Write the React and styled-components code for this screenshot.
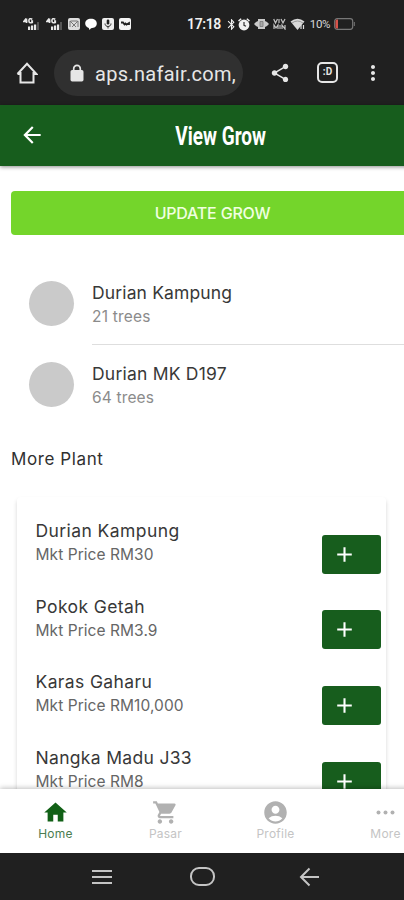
import React from "react";
import styled, { createGlobalStyle } from "styled-components";
import {
  MdHome,
  MdShoppingCart,
  MdAccountCircle,
  MdMoreVert,
  MdArrowBack,
  MdAdd,
  MdShare,
  MdBluetooth,
} from "react-icons/md";

const GlobalStyle = createGlobalStyle`
  * { box-sizing: border-box; }
  body { margin: 0; background: #fff; overflow: hidden; }
`;

const Screen = styled.div`
  width: 404px;
  height: 900px;
  display: flex;
  flex-direction: column;
  overflow: hidden;
  background: #fff;
  font-family: Inter, "Liberation Sans", sans-serif;
  svg { display: block; flex: none; }
`;

const StatusBar = styled.div`
  height: 48px;
  flex: none;
  display: flex;
  justify-content: space-between;
  padding: 0 49px 0 23px;
  align-items: center;
  background: #202020;
  color: #f0f0f0;
  font-family: Roboto, sans-serif;
`;

const StatusGroup = styled.div`
  display: flex;
  align-items: center;
  gap: ${(p) => p.$gap}px;
`;

const Clock = styled.span`
  font-size: 14px;
  font-weight: 600;
  letter-spacing: -0.4px;
  margin-right: 4px;
`;

const Percent = styled.span`
  font-size: 11.5px;
  margin: 0 4px 0 5px;
  letter-spacing: -0.4px;
  color: #d8d8d8;
`;

const AddressBar = styled.div`
  height: 57px;
  flex: none;
  display: flex;
  align-items: center;
  padding: 0 19px 8px 16px;
  background: #202020;
  color: #e6e6e6;
`;

const UrlPill = styled.div`
  width: 189px;
  height: 46px;
  margin-left: 16px;
  padding-left: 16px;
  display: flex;
  align-items: center;
  gap: 11px;
  border-radius: 23px;
  background: #303030;
`;

const Url = styled.span`
  white-space: nowrap;
  font: 400 20px/28px Roboto, sans-serif;
  letter-spacing: 0.3px;
  padding-top: 2px;
`;

const BrowserActions = styled.div`
  flex: 1;
  display: flex;
  align-items: center;
  justify-content: space-between;
  margin-left: 26px;
`;

const Header = styled.header`
  position: relative;
  z-index: 1;
  flex: none;
  width: 440px;
  height: 61px;
  display: grid;
  grid-template-columns: 64px 1fr 63px;
  align-items: center;
  padding-bottom: 1px;
  background: #175d1d;
  color: #fff;
  box-shadow: 0 1px 4px rgba(0, 0, 0, 0.45);
`;

const BackSlot = styled.div`
  padding-left: 19px;
`;

const Title = styled.h1`
  margin: 0;
  padding-top: 4px;
  justify-self: center;
  white-space: nowrap;
  font: 700 25px/36px Roboto, sans-serif;
  transform: scaleX(0.76);
`;

const Content = styled.main`
  flex: 1;
  min-height: 0;
  width: 414px;
  overflow: hidden;
  padding-top: 25px;
`;

const UpdateButton = styled.button`
  display: block;
  width: 403px;
  height: 44px;
  margin: 0 0 29px 11px;
  padding: 0;
  border: 0;
  border-radius: 4px;
  background: #74d52b;
  color: #f0ffe0;
  font: 500 16px/44px Inter, sans-serif;
  letter-spacing: -0.2px;
`;

const GrowItem = styled.div`
  height: 81px;
  display: flex;
  padding-left: 29px;
  gap: 18px;
`;

const Avatar = styled.div`
  width: 45px;
  height: 45px;
  margin-top: 17px;
  border-radius: 50%;
  background: #cacaca;
`;

const GrowText = styled.div`
  flex: 1;
  padding-top: 17px;
  border-bottom: ${(p) => (p.$last ? "0" : "1px solid #dedede")};
`;

const Name = styled.div`
  font-size: 17.5px;
  line-height: 24px;
  letter-spacing: ${(p) => p.$spacing}px;
  color: #383838;
  white-space: nowrap;
`;

const Detail = styled.div`
  font-size: 15.5px;
  line-height: 24px;
  letter-spacing: ${(p) => p.$spacing}px;
  color: ${(p) => p.$color};
  white-space: nowrap;
`;

const SectionTitle = styled.h2`
  margin: 21px 0 26px 11px;
  font-size: 17px;
  font-weight: 400;
  line-height: 24px;
  letter-spacing: 0.6px;
  color: #303030;
`;

const PlantCard = styled.section`
  width: 369px;
  margin-left: 17px;
  padding-top: 22px;
  border-radius: 4px;
  box-shadow: 0 3px 4px rgba(0, 0, 0, 0.17);
`;

const PlantRow = styled.div`
  height: 75.7px;
  display: flex;
  justify-content: space-between;
  padding: 0 5px 0 18.5px;
`;

const AddButton = styled.button`
  width: 59px;
  height: 39px;
  margin-top: 15.5px;
  padding: 0 0 0 10px;
  display: flex;
  align-items: center;
  border: 0;
  border-radius: 3px;
  background: #175d1d;
  color: #fff;
`;

const TabBar = styled.nav`
  position: relative;
  z-index: 1;
  flex: none;
  width: 440px;
  height: 64px;
  display: grid;
  grid-template-columns: repeat(4, 110px);
  background: #fff;
  box-shadow: 0 -1px 5px rgba(0, 0, 0, 0.25);
`;

const Tab = styled.div`
  display: flex;
  flex-direction: column;
  align-items: center;
  padding: 10px 0 0 1px;
  color: ${(p) => (p.$active ? "#116016" : "#b1b1b1")};
`;

const TabLabel = styled.span`
  font-size: 12px;
  line-height: 15px;
  letter-spacing: 0.25px;
  color: ${(p) => (p.$active ? "#4b7d50" : "#c4c4c4")};
`;

const SystemNav = styled.div`
  position: relative;
  z-index: 2;
  flex: none;
  height: 47px;
  display: flex;
  align-items: center;
  padding-left: 91px;
  background: #202020;
`;

const NavButton = styled.div`
  margin-right: ${(p) => p.$after}px;
`;

const Signal = () => (
  <svg width="17" height="13" viewBox="0 0 17 13" fill="#e8e8e8">
    <path d="M3.2 0.6 .9 3.4H4.500M3.500.6v4.400M9.300 1.300Q6-.3 5.900 2.700 6 5.700 9.300 4.400V3H8" fill="none" stroke="#e8e8e8" strokeWidth="1.600" />
    <rect x="5" y="8.500" width="2.200" height="3.500" />
    <rect x="8" y="7.500" width="2.200" height="4.500" />
    <rect x="11" y="6.500" width="2.200" height="5.500" />
    <rect x="14" y="4" width="2" height="8" fill="#555" />
  </svg>
);

const MailBadge = () => (
  <svg width="12" height="12" viewBox="0 0 12 12">
    <rect width="12" height="12" rx="2" fill="#dedede" />
    <path d="M2 9V3l4 4 4-4v6M2.500 3h7M4 9l2-2 2 2" fill="none" stroke="#777" />
  </svg>
);

const ChatBubble = () => (
  <svg width="12" height="12" viewBox="0 0 12 12">
    <path d="M6 .8c3.400 0 5.800 2 5.800 4.800S9.400 10.300 6 10.300L4.500 12l-.7-2C1.600 9.300.2 7.700.2 5.600.2 2.800 2.600.8 6 .8Z" fill="#fff" />
  </svg>
);

const MicBadge = () => (
  <svg width="12" height="12" viewBox="0 0 12 12">
    <rect width="12" height="12" rx="2" fill="#eee" />
    <rect x="4.700" y="1.500" width="2.600" height="5" rx="1.300" fill="#222" />
    <path d="M3 5.500c0 4 6 4 6 0M6 8.500v2" fill="none" stroke="#333" />
  </svg>
);

const WaveBadge = () => (
  <svg width="12" height="12" viewBox="0 0 12 12">
    <rect width="12" height="12" rx="2" fill="#f4f4f4" />
    <path d="M2 4.500h2l1.500 2 1-1 1 1L10 5v2" fill="none" stroke="#222" strokeWidth="1.800" />
  </svg>
);

const Alarm = () => (
  <svg width="12" height="13" viewBox="0 0 12 13">
    <path d="M.5 3 3.200.7M11.500 3 8.800.7" stroke="#f0f0f0" strokeWidth="1.500" />
    <circle cx="6" cy="7" r="5.400" fill="#f0f0f0" />
    <path d="M6 4v3.300l2 1" fill="none" stroke="#333" strokeWidth="1.200" />
  </svg>
);

const Vibrate = () => (
  <svg width="15" height="12" viewBox="0 0 15 12">
    <path d="M4 1h7v2l2 1 2 2-2 2-2 1v2H4V9L2 8 0 6l2-2 2-1Z" fill="#c9c9c9" />
    <path d="M6 3.500h3v5H6Z" fill="#aaa" stroke="#777" strokeWidth=".8" />
  </svg>
);

const VoLte = () => (
  <svg width="13" height="12" viewBox="0 0 13 12" fill="none" stroke="#c4c4c4" strokeWidth="1.200">
    <path d="m.7 1 1.800 4L4.500 1M6 1v4M8 1l2 4 2-4M1 11V7l2 3 2-3v4M7 7v4M9 11V7l3 4V7" />
  </svg>
);

const Wifi = () => (
  <svg width="15" height="12" viewBox="0 0 15 12">
    <path d="M.5 3.500Q7.500-1.800 14.500 3.500L7.500 12Z" fill="#d8d8d8" />
    <path d="M2 5Q7.500 1 13 5" fill="none" stroke="#888" strokeWidth=".8" />
    <path d="M11 11V7M13.500 11V7" stroke="#ddd" strokeWidth="1.200" />
  </svg>
);

const Battery = () => (
  <svg width="21" height="12" viewBox="0 0 21 12">
    <rect x=".7" y=".7" width="18" height="10.600" rx="2.500" fill="none" stroke="#777" strokeWidth="1.200" />
    <path d="M1.500 3q0-1.500 1.500-1.500h1v9H3Q1.500 10.500 1.500 9Z" fill="#d9534a" />
    <path d="M20.300 4v4" stroke="#777" />
  </svg>
);

const BrowserHome = () => (
  <svg width="22" height="22" viewBox="0 0 22 22" fill="none" stroke="#e6e6e6" strokeWidth="2">
    <path d="M4.500 10v10.500h13V10M1.500 12 11 1.700 20.500 12H17M5 12H1.500" />
  </svg>
);

const Lock = () => (
  <svg width="14" height="18" viewBox="0 0 14 18">
    <path d="M3.700 7V4.700a3.300 3.300 0 0 1 6.600 0V7" fill="none" stroke="#e6e6e6" strokeWidth="1.700" />
    <rect x=".5" y="6" width="13" height="11.500" rx="1.700" fill="#e6e6e6" />
  </svg>
);

const MoreDots = () => (
  <svg width="27" height="27" viewBox="0 0 27 27" fill="currentColor">
    <circle cx="6.500" cy="13.500" r="2" />
    <circle cx="13.500" cy="13.500" r="2" />
    <circle cx="20.500" cy="13.500" r="2" />
  </svg>
);

const TabSwitcher = styled.div`
  width: 21px;
  height: 21px;
  margin-left: 3px;
  border: 2px solid #e6e6e6;
  border-radius: 5px;
  font: 700 10px/16px Roboto, sans-serif;
  text-align: center;
`;

const PLANTS = [
  { name: "Durian Kampung", price: "Mkt Price RM30", spacing: 0.42 },
  { name: "Pokok Getah", price: "Mkt Price RM3.9", spacing: 0.4 },
  { name: "Karas Gaharu", price: "Mkt Price RM10,000", spacing: 0.38 },
  { name: "Nangka Madu J33", price: "Mkt Price RM8", spacing: 0.32 },
];

const TABS = [
  { label: "Home", Icon: MdHome, active: true },
  { label: "Pasar", Icon: MdShoppingCart },
  { label: "Profile", Icon: MdAccountCircle },
  { label: "More", Icon: MoreDots },
];

export default function App() {
  return (
    <Screen>
      <GlobalStyle />
      <StatusBar>
        <StatusGroup $gap={5}>
          <StatusGroup $gap={6}>
            <Signal />
            <Signal />
          </StatusGroup>
          <MailBadge />
          <ChatBubble />
          <MicBadge />
          <WaveBadge />
        </StatusGroup>
        <StatusGroup $gap={0}>
          <Clock>17:18</Clock>
          <MdBluetooth size={13} />
          <StatusGroup $gap={4}>
            <Alarm />
            <Vibrate />
            <VoLte />
            <Wifi />
          </StatusGroup>
          <Percent>10%</Percent>
          <Battery />
        </StatusGroup>
      </StatusBar>
      <AddressBar>
        <BrowserHome />
        <UrlPill>
          <Lock />
          <Url>aps.nafair.com,</Url>
        </UrlPill>
        <BrowserActions>
          <MdShare size={22} />
          <TabSwitcher>:D</TabSwitcher>
          <MdMoreVert size={24} />
        </BrowserActions>
      </AddressBar>
      <Header>
        <BackSlot>
          <MdArrowBack size={26} />
        </BackSlot>
        <Title>View Grow</Title>
      </Header>
      <Content>
        <UpdateButton>UPDATE GROW</UpdateButton>
        <GrowItem>
          <Avatar />
          <GrowText>
            <Name $spacing={0.14}>Durian Kampung</Name>
            <Detail $spacing={0.2} $color="#8b8b8b">21 trees</Detail>
          </GrowText>
        </GrowItem>
        <GrowItem>
          <Avatar />
          <GrowText $last>
            <Name $spacing={0.22}>Durian MK D197</Name>
            <Detail $spacing={0.15} $color="#8b8b8b">64 trees</Detail>
          </GrowText>
        </GrowItem>
        <SectionTitle>More Plant</SectionTitle>
        <PlantCard>
          {PLANTS.map((plant) => (
            <PlantRow key={plant.name}>
              <div>
                <Name $spacing={plant.spacing}>{plant.name}</Name>
                <Detail $spacing={0.06} $color="#666">{plant.price}</Detail>
              </div>
              <AddButton aria-label="Add">
                <MdAdd size={25} />
              </AddButton>
            </PlantRow>
          ))}
        </PlantCard>
      </Content>
      <TabBar>
        {TABS.map(({ label, Icon, active }) => (
          <Tab key={label} $active={active}>
            <Icon size={27} />
            <TabLabel $active={active}>{label}</TabLabel>
          </Tab>
        ))}
      </TabBar>
      <SystemNav>
        <NavButton $after={77}>
          <svg width="22" height="18" viewBox="0 0 22 18" stroke="#c4c4c4" strokeWidth="2">
            <path d="M1 3h20M1 9h20M1 15h20" />
          </svg>
        </NavButton>
        <NavButton $after={84}>
          <svg width="25" height="19" viewBox="0 0 25 19" fill="none" stroke="#c4c4c4" strokeWidth="2">
            <rect x="1" y="1" width="23" height="17" rx="8" />
          </svg>
        </NavButton>
        <NavButton $after={0}>
          <svg width="21" height="20" viewBox="0 0 21 20" fill="none" stroke="#c4c4c4" strokeWidth="2">
            <path d="M20 10H2M10.500 1.500 2 10l8.500 8.500" />
          </svg>
        </NavButton>
      </SystemNav>
    </Screen>
  );
}
